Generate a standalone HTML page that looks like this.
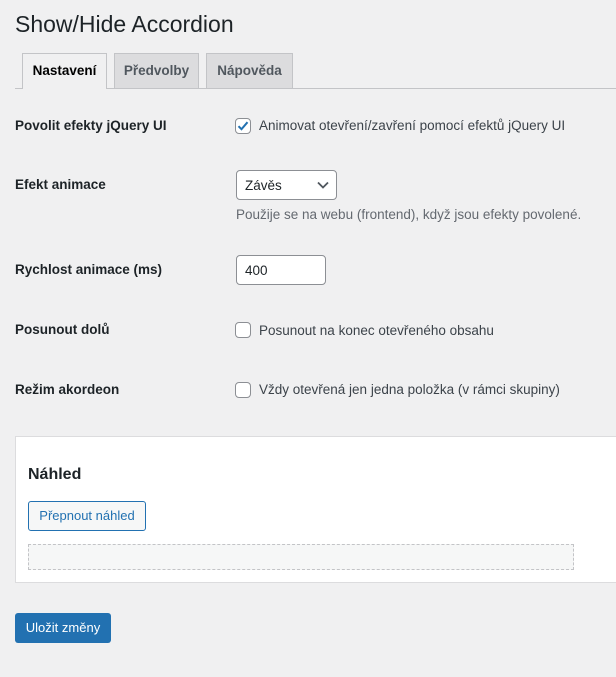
<!DOCTYPE html>
<html><head><meta charset="utf-8"><style>
*{box-sizing:border-box;margin:0;padding:0}
body{width:616px;height:677px;background:#f0f0f1;font-family:"Liberation Sans",Arial,sans-serif;color:#1d2327;font-size:13.5px;position:relative;overflow:hidden}
.a{position:absolute;white-space:nowrap}
h1{position:absolute;left:15px;top:11px;font-size:23px;font-weight:400;color:#1d2327}
.line{position:absolute;left:15px;right:0;top:88px;border-top:1px solid #c3c4c7}
.tab{position:absolute;top:53px;height:35px;border:1px solid #c3c4c7;border-bottom:none;background:#dcdcde;font-weight:bold;font-size:13.5px;color:#50575e;text-align:center;line-height:34px}
.tab.on{background:#f0f0f1;color:#000;height:36px}
.lbl{font-weight:bold;font-size:13.5px}
.cb{position:absolute;width:16px;height:16px;border:1px solid #8c8f94;border-radius:4px;background:#fff}
.txt{font-size:13.5px;color:#3c434a}
</style></head><body>
<h1>Show/Hide Accordion</h1>
<div class="line"></div>
<div class="tab on" style="left:22px;width:85px">Nastavení</div>
<div class="tab" style="left:114px;width:85px">Předvolby</div>
<div class="tab" style="left:206px;width:87px">Nápověda</div>

<div class="a lbl" style="left:15px;top:118px">Povolit efekty jQuery UI</div>
<div class="cb" style="left:235px;top:118px"><svg width="16" height="16" viewBox="0 0 16 16" style="position:absolute;left:-1px;top:-1px"><path d="M3.5 8.2l3 3 6-7" fill="none" stroke="#2271b1" stroke-width="2"/></svg></div>
<div class="a txt" style="left:259px;top:118px">Animovat otevření/zavření pomocí efektů jQuery UI</div>

<div class="a lbl" style="left:15px;top:177px">Efekt animace</div>
<div class="a" style="left:236px;top:170px;width:101px;height:30px;border:1px solid #8c8f94;border-radius:4px;background:#fff"><span class="a" style="left:8px;top:7px;font-size:13.5px">Závěs</span><svg class="a" style="left:80px;top:10px" width="12" height="8" viewBox="0 0 12 8"><path d="M1 1.5l5 5 5-5" fill="none" stroke="#50575e" stroke-width="1.8"/></svg></div>
<div class="a txt" style="left:236px;top:207px;color:#646970">Použije se na webu (frontend), když jsou efekty povolené.</div>

<div class="a lbl" style="left:15px;top:262px">Rychlost animace (ms)</div>
<div class="a" style="left:236px;top:255px;width:90px;height:30px;border:1px solid #8c8f94;border-radius:4px;background:#fff"><span class="a" style="left:8px;top:7px;font-size:13.5px">400</span></div>

<div class="a lbl" style="left:15px;top:322px">Posunout dolů</div>
<div class="cb" style="left:235px;top:322px"></div>
<div class="a txt" style="left:259px;top:323px">Posunout na konec otevřeného obsahu</div>

<div class="a lbl" style="left:15px;top:382px">Režim akordeon</div>
<div class="cb" style="left:235px;top:382px"></div>
<div class="a txt" style="left:259px;top:382px">Vždy otevřená jen jedna položka (v rámci skupiny)</div>

<div class="a" style="left:15px;top:436px;width:610px;height:147px;background:#fff;border:1px solid #dcdcde"></div>
<div class="a" style="left:28px;top:466px;font-size:16px;font-weight:bold;color:#1d2327">Náhled</div>
<div class="a" style="left:28px;top:501px;width:118px;height:30px;border:1px solid #2271b1;border-radius:3px;background:#f6f7f7;color:#2271b1;font-size:13px;text-align:center;line-height:28px">Přepnout náhled</div>
<div class="a" style="left:28px;top:544px;width:546px;height:26px;border:1px dashed #c3c4c7;background:#f6f7f7"></div>

<div class="a" style="left:15px;top:613px;width:96px;height:30px;background:#2271b1;border-radius:3px;color:#fff;font-size:13px;text-align:center;line-height:30px">Uložit změny</div>
</body></html>
